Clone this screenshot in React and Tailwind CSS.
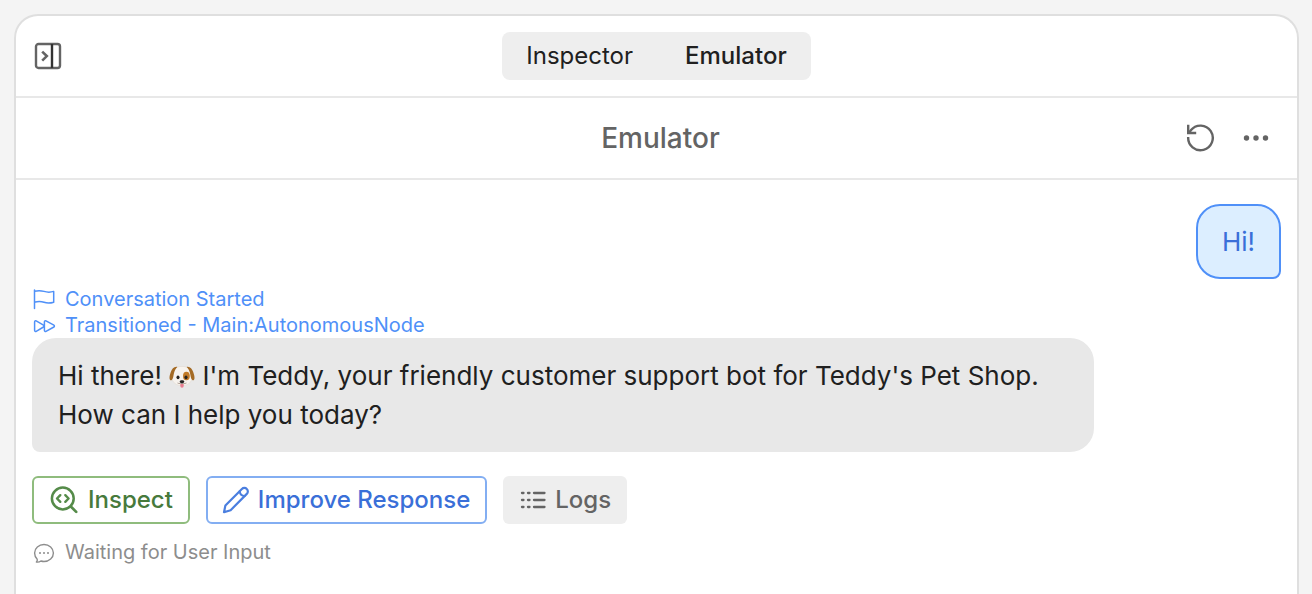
import React from "react";

function Icon({ className, children, viewBox = "0 0 15 15" }) {
  return (
    <svg viewBox={viewBox} className={className} fill="none" stroke="currentColor" strokeLinecap="round" strokeLinejoin="round" aria-hidden="true">
      {children}
    </svg>
  );
}

function PanelIcon() {
  return (
    <Icon viewBox="0 0 28 28" className="size-7">
      <rect x="2" y="2" width="24" height="24" rx="2.5" strokeWidth="2.4" />
      <path d="M18 2v24" stroke="#333333" strokeWidth="2.4" strokeLinecap="butt" />
      <path d="M8.2 9.6l4.6 4.500-4.600 4.500" strokeWidth="2.600" strokeLinecap="butt" strokeLinejoin="miter" />
    </Icon>
  );
}

function RestartIcon() {
  return (
    <Icon viewBox="0 0 30 30" className="size-[30px]">
      <path d="M3.200 14A12.300 12.300 0 1 0 5.800 7.300 12.300 12.300 0 0 0 3.800 10" strokeWidth="2.400" strokeLinecap="butt" />
      <path d="M3.200 1.800v8.200h8" strokeWidth="2.400" strokeLinecap="butt" strokeLinejoin="miter" />
    </Icon>
  );
}

function MoreIcon() {
  return (
    <svg viewBox="0 0 30 30" className="size-[30px]" fill="currentColor" aria-hidden="true">
      <circle cx="5.5" cy="15" r="2.7" />
      <circle cx="15" cy="15" r="2.7" />
      <circle cx="24.5" cy="15" r="2.7" />
    </svg>
  );
}

function FlagIcon() {
  return (
    <Icon viewBox="0 0 24 24" className="size-6">
      <path d="M2.500 3v18.500M2.500 4.300c4.500-1.200 6.500-.8 9.500.1s5.800 1.200 9.700 0v10.800c-3.900 1.200-6.700 1.100-9.700.1s-5-1.300-9.500-.1" strokeWidth="1.5" />
    </Icon>
  );
}

function ForwardIcon() {
  return (
    <Icon viewBox="0 0 24 24" className="size-6">
      <path d="M2.600 8.900c0-.9.900-1.400 1.600-1l7.300 4.300c.7.400.7 1.400 0 1.800l-7.300 4.300c-.7.400-1.600 0-1.600-1z" strokeWidth="1.500" />
      <path d="M12.400 8.900c0-.9.900-1.400 1.600-1l7.900 4.300c.7.400.7 1.400 0 1.800L14 18.300c-.7.400-1.600 0-1.600-1z" strokeWidth="1.500" />
    </Icon>
  );
}

function ChatIcon() {
  return (
    <Icon viewBox="0 0 24 24" className="size-6">
      <path d="M12 4.500c5.200 0 9.400 3.800 9.400 8.500s-4.200 8.500-9.400 8.500c-1.100 0-2.100-.2-3.100-.5-1.200.9-2.800 1.300-4.500 1 .8-.9 1.100-1.900.8-2.800-1.600-1.600-2.600-3.700-2.600-6.200 0-4.700 4.200-8.500 9.400-8.500z" strokeWidth="1.400" />
      <path d="M8 13h.01M12 13h.01M16 13h.01" strokeWidth="2" />
    </Icon>
  );
}

function InspectIcon() {
  return (
    <Icon viewBox="0 0 28 28" className="size-7 text-[#558b49]">
      <circle cx="12.800" cy="12.500" r="10.900" strokeWidth="2.500" />
      <path d="M20.800 20.500l5.400 5.400" strokeWidth="2.700" />
      <path d="M10.300 9.200l-3.300 3.300 3.300 3.300M15.300 9.200l3.300 3.300-3.300 3.300" strokeWidth="2.400" />
    </Icon>
  );
}

function PencilIcon() {
  return (
    <Icon viewBox="0 0 28 28" className="size-7 text-[#4a7edf]">
      <path d="M2 26.200l1.400-6.700L19.900 3a3.400 3.400 0 0 1 4.900 0 3.400 3.400 0 0 1 0 4.900L8.600 24.200z" strokeWidth="2.200" />
      <path d="M17.700 5.200c.3 3.200 1.700 4.700 4.900 4.900" strokeWidth="2" />
    </Icon>
  );
}

function ListIcon() {
  return (
    <Icon viewBox="0 0 28 28" className="size-7">
      <path d="M3 7h1.500M9 7h1.500M15 7h10.500M3 14h1.500M9 14h1.500M15 14h10.500M3 21h1.500M9 21h1.500M15 21h10.500" strokeWidth="2.300" />
    </Icon>
  );
}

function DogFace() {
  return (
    <svg viewBox="0 0 26 26" className="inline-block size-[26px] align-[-5px]" role="img" aria-label="dog">
      <path d="M13 2.400c4.300 0 7.300 1.300 8.800 4.800 1.300 3 1.700 7 .5 9.500-1.500 3.200-5 5-9.300 5s-7.800-1.800-9.300-5c-1.200-2.500-.8-6.500.5-9.500C5.700 3.700 8.700 2.400 13 2.400z" fill="#f7f3ee" stroke="#d8cec4" strokeWidth=".4" />
      <path d="M8.300 2.900C5 2.300 3 4.700 1.800 8 1 10.200.4 12.500.5 14.200c.1 1.800 1.300 2.500 2.300 1.700 1.700-1.400 1.500-4.500 2.300-7.200.7-2.400 1.600-4.300 3.200-5.800z" fill="#a46a24" />
      <path d="M17.700 2.900c3.300-.6 5.300 1.800 6.500 5.100.8 2.200 1.400 4.500 1.300 6.200-.1 1.800-1.300 2.500-2.300 1.700-1.700-1.400-1.500-4.500-2.300-7.200-.7-2.400-1.600-4.300-3.200-5.800z" fill="#a46a24" />
      <ellipse cx="17.400" cy="12" rx="3.400" ry="4.300" fill="#c17a27" />
      <ellipse cx="9" cy="13.300" rx="1.500" ry="1.900" fill="#252321" />
      <ellipse cx="17" cy="13.300" rx="1.500" ry="1.900" fill="#252321" />
      <path d="M8.500 19c2 1 3.700.6 4.500-.7.800 1.300 2.500 1.700 4.500.7" fill="none" stroke="#a99a8e" strokeWidth=".9" />
      <path d="M11.300 20h3.400v2a1.700 1.700 0 0 1-3.400 0z" fill="#e87e90" />
      <path d="M10.700 17.600c0-.9 1-1.300 2.300-1.300s2.300.4 2.300 1.300c0 1-1.200 1.900-2.300 2.200-1.100-.3-2.300-1.200-2.300-2.200z" fill="#242120" />
    </svg>
  );
}

function StatusLine({ icon, children, className }) {
  return (
    <div className={`flex items-center gap-[9px] text-[20px] leading-[26px] ${className}`}>
      {icon}
      <span>{children}</span>
    </div>
  );
}

export default function App() {
  return (
    <div className="flex min-h-screen flex-col bg-[#f4f4f4] pt-[14px] pr-[13px] pl-[14px] font-['Inter',sans-serif] text-[#202020]">
      <main className="flex flex-1 flex-col rounded-t-3xl border-2 border-b-0 border-[#dfdfdf] bg-white">
        <header className="grid grid-cols-[1fr_auto_1fr] items-center border-b-2 border-[#e8e8e8] px-4 py-4">
          <button type="button" aria-label="Collapse panel" className="ml-0.5 justify-self-start text-[#646464]">
            <PanelIcon />
          </button>
          <div role="tablist" className="flex h-12 items-center gap-1 rounded-lg bg-[#eeeeee] text-2xl">
            <button type="button" role="tab" aria-selected="false" className="px-6">Inspector</button>
            <button type="button" role="tab" aria-selected="true" className="px-6 font-medium">Emulator</button>
          </div>
        </header>

        <div className="grid h-[82px] grid-cols-[1fr_auto_1fr] items-center border-b-2 border-[#e8e8e8] pr-[26px] pl-[34px] text-[#646464]">
          <h1 className="col-start-2 text-[28px] font-medium">Emulator</h1>
          <div className="flex items-center justify-end gap-[26px]">
            <button type="button" aria-label="Restart conversation"><RestartIcon /></button>
            <button type="button" aria-label="More options"><MoreIcon /></button>
          </div>
        </div>

        <section className="flex flex-col items-start px-4 pt-6">
          <p className="self-end rounded-3xl rounded-br-lg border-2 border-[#4f90f8] bg-[#dceeff] px-6 py-4 text-[26px] leading-[39px] text-[#3a6fd8]">Hi!</p>

          <StatusLine icon={<FlagIcon />} className="mt-[7px] text-[#4f90f8]">Conversation Started</StatusLine>
          <StatusLine icon={<ForwardIcon />} className="text-[#4f90f8]">Transitioned - Main:AutonomousNode</StatusLine>

          <p className="max-w-[85%] rounded-3xl rounded-bl-lg bg-[#e8e8e8] px-[26px] py-[18px] text-[26px] leading-[39px]">
            Hi there! <DogFace /> I'm Teddy, your friendly customer support bot for Teddy's Pet Shop. How can I help you today?
          </p>

          <div className="mt-6 flex gap-4 text-2xl font-medium">
            <button type="button" className="flex h-12 items-center gap-2.5 rounded-md border-2 border-[#8fbc7d] pr-[15px] pl-4 text-[#477a3c]">
              <InspectIcon />Inspect
            </button>
            <button type="button" className="flex h-12 items-center gap-2 rounded-md border-2 border-[#83aef2] pr-[15px] pl-3.5 text-[#3a6fd8]">
              <PencilIcon />Improve Response
            </button>
            <button type="button" className="flex h-12 items-center gap-2 rounded-md bg-[#eeeeee] px-4 text-[#646464]">
              <ListIcon />Logs
            </button>
          </div>

          <StatusLine icon={<ChatIcon />} className="mt-[15px] text-[#8d8d8d]">Waiting for User Input</StatusLine>
        </section>
      </main>
    </div>
  );
}
